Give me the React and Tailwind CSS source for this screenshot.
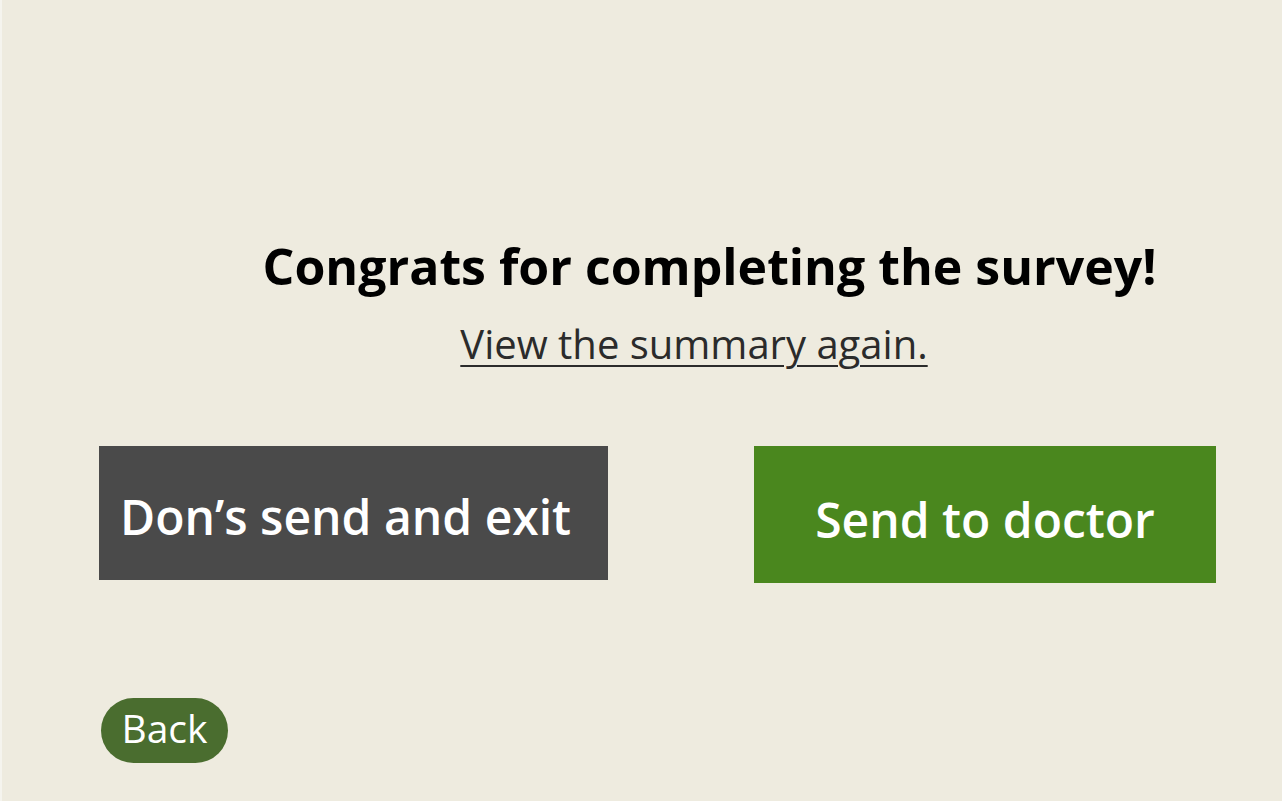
export default function App() {
  return (
    <div
      className="min-h-[801px] w-full bg-[#eeebdf] border-l-2 border-[#f5f4ee] flex flex-col"
      style={{ fontFamily: '"Open Sans", sans-serif' }}
    >
      <div className="pt-[236px] pl-[260px] pr-[125px] flex justify-center">
        <h1 className="text-[50px] font-bold text-black leading-[60px] whitespace-nowrap">
          Congrats for completing the survey!
        </h1>
      </div>
      <div className="flex justify-center pl-[104px] mt-[24px]">
        <a href="#" className="text-[40px] font-normal text-[#2b2b2b] underline leading-[48px] underline-offset-[6px] decoration-2">
          View the summary again.
        </a>
      </div>
      <div className="flex items-start mt-[78px] pl-[97px]">
        <button className="w-[509px] h-[134px] bg-[#4a4a4a] text-white text-[48px] font-semibold text-left pl-[21px] pt-[8px]">
          Don’s send and exit
        </button>
        <button className="ml-[146px] w-[462px] h-[137px] bg-[#4a871e] text-white text-[48px] font-semibold pt-[10px]">
          Send to doctor
        </button>
      </div>
      <div className="mt-[115px] pl-[99px]">
        <button className="w-[127px] h-[65px] rounded-full bg-[#4a6d2f] text-white text-[39px] leading-none pb-[6px]">
          Back
        </button>
      </div>
    </div>
  )
}
